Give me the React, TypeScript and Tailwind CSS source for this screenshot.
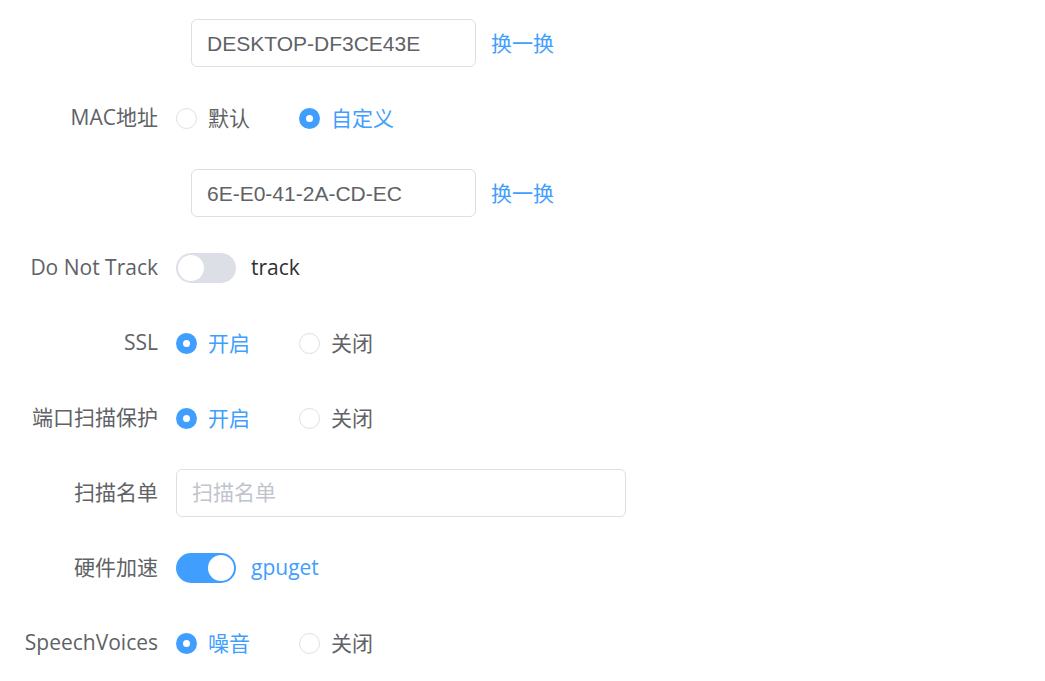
import React, { useState } from 'react';

const font = { fontFamily: '"Liberation Sans", "Noto Sans CJK SC", sans-serif' };
const labelFont = { fontFamily: '"Open Sans", "Noto Sans CJK SC", sans-serif' };

function Radio({ checked, label }: { checked: boolean; label: string }) {
  return (
    <label className="flex items-center cursor-pointer">
      {checked ? (
        <span className="flex h-[21px] w-[21px] items-center justify-center rounded-full bg-[#409eff]">
          <span className="h-[7px] w-[7px] rounded-full bg-white" />
        </span>
      ) : (
        <span className="h-[21px] w-[21px] rounded-full border border-[#dcdfe6] bg-white" />
      )}
      <span className={`ml-[11px] pt-[1px] text-[21px] ${checked ? 'text-[#409eff]' : 'text-[#606266]'}`}>{label}</span>
    </label>
  );
}

function RadioGroup({ options, value }: { options: string[]; value: number }) {
  return (
    <div className="flex items-center">
      {options.map((o, i) => (
        <div key={o} className="w-[123px]">
          <Radio checked={i === value} label={o} />
        </div>
      ))}
    </div>
  );
}

function Switch({ on, label }: { on: boolean; label: string }) {
  return (
    <div className="flex items-center">
      <span
        className={`flex h-[30px] w-[60px] items-center rounded-full px-[2px] ${
          on ? 'justify-end bg-[#409eff]' : 'justify-start bg-[#dcdfe6]'
        }`}
      >
        <span className="h-[26px] w-[26px] rounded-full bg-white" />
      </span>
      <span
        className={`ml-[15px] text-[21px] ${on ? 'text-[#409eff]' : 'text-[#303133]'}`}
        style={labelFont}
      >
        {label}
      </span>
    </div>
  );
}

function Row({ label, children }: { label?: string; children: React.ReactNode }) {
  return (
    <div className="flex h-12 items-center">
      <div className="w-[158px] text-right text-[21px] text-[#606266]" style={labelFont}>
        {label}
      </div>
      <div className="ml-[18px] flex items-center">{children}</div>
    </div>
  );
}

function RefreshInput({ value }: { value: string }) {
  return (
    <div className="ml-[15px] flex items-center">
      <input
        readOnly
        value={value}
        className="h-12 w-[285px] rounded-[6px] border border-[#dcdfe6] bg-white px-[15px] pt-[2px] text-[21px] text-[#606266] outline-none"
        style={font}
      />
      <span className="ml-[15px] pt-[1px] cursor-pointer text-[21px] text-[#409eff]">换一换</span>
    </div>
  );
}

export default function App() {
  const [scanList, setScanList] = useState('');

  return (
    <div className="min-h-screen w-full bg-white" style={font}>
      <div className="flex flex-col gap-[27px] pt-[19px]">
        <Row>
          <RefreshInput value="DESKTOP-DF3CE43E" />
        </Row>
        <Row label="MAC地址">
          <RadioGroup options={['默认', '自定义']} value={1} />
        </Row>
        <Row>
          <RefreshInput value="6E-E0-41-2A-CD-EC" />
        </Row>
        <Row label="Do Not Track">
          <Switch on={false} label="track" />
        </Row>
        <Row label="SSL">
          <RadioGroup options={['开启', '关闭']} value={0} />
        </Row>
        <Row label="端口扫描保护">
          <RadioGroup options={['开启', '关闭']} value={0} />
        </Row>
        <Row label="扫描名单">
          <input
            value={scanList}
            onChange={(e) => setScanList(e.target.value)}
            placeholder="扫描名单"
            className="h-12 w-[450px] rounded-[6px] border border-[#dcdfe6] bg-white px-[15px] text-[21px] text-[#606266] outline-none placeholder:text-[#c0c4cc]"
            style={font}
          />
        </Row>
        <Row label="硬件加速">
          <Switch on={true} label="gpuget" />
        </Row>
        <Row label="SpeechVoices">
          <RadioGroup options={['噪音', '关闭']} value={0} />
        </Row>
      </div>
    </div>
  );
}
